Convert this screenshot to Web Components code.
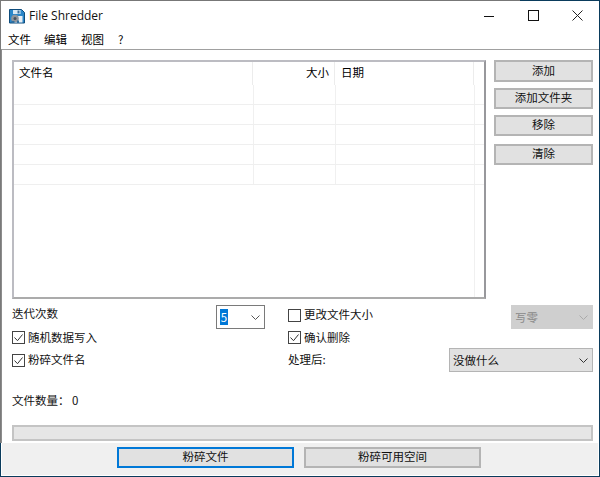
<!DOCTYPE html>
<html lang="zh"><head><meta charset="utf-8">
<style>
html,body{margin:0;padding:0;background:#fff;overflow:hidden}
body{font:11.5px/16px "Noto Sans CJK SC","Noto Sans",sans-serif;color:#000}
</style></head><body>
<fs-window>
  <fs-titlebar slot="title">File Shredder</fs-titlebar>
  <fs-menubar slot="menu"><span>文件</span><span>编辑</span><span>视图</span><span>?</span></fs-menubar>
  <fs-list slot="list"></fs-list>
  <fs-button slot="side" h="22">添加</fs-button>
  <fs-button slot="side" h="21" gap="6">添加文件夹</fs-button>
  <fs-button slot="side" h="21" gap="6">移除</fs-button>
  <fs-button slot="side" h="21" gap="8">清除</fs-button>
  <fs-options slot="options"></fs-options>
  <fs-progress slot="progress"></fs-progress>
  <fs-button slot="foot" w="177" h="21" focus>粉碎文件</fs-button>
  <fs-button slot="foot" w="177" h="21">粉碎可用空间</fs-button>
</fs-window>
<script>
const def=(name,html)=>{customElements.define(name,class extends HTMLElement{
  constructor(){super();const r=this.attachShadow({mode:"open"});r.innerHTML=typeof html==="function"?html(this):html;}
})};
const F='font-size:11.5px;line-height:16px;';

def("fs-window",`<style>
:host{display:block;box-sizing:border-box;width:600px;height:477px;padding:1px;
 background:linear-gradient(#777 0 0) 0 0/520px 1px no-repeat,linear-gradient(#7a7a7a 0 0) 0 1px/1px 442px no-repeat,#0a3b5c}
.in{background:#fff;height:100%;display:flex;flex-direction:column;box-sizing:border-box}
.main{flex:1;display:flex;flex-direction:column;min-height:0;border-top:1px solid #a0a0a0;border-left:1px solid #8c8c8c;
 background:#fff;padding:10px 6px 0 10px;box-sizing:border-box}
.top{display:flex;gap:8px;height:239px;flex:none}
.side{display:flex;flex-direction:column;width:99px}
.foot{margin:0 1px 1px 1px;height:32px;background:#f0f0f0;display:flex;gap:10px;padding:4px 0 0 115px;box-sizing:border-box;flex:none}
</style><div class="in">
<slot name="title"></slot><slot name="menu"></slot>
<div class="main"><div class="top"><slot name="list"></slot><div class="side"><slot name="side"></slot></div></div>
<slot name="options"></slot><slot name="progress"></slot></div>
<div class="foot"><slot name="foot"></slot></div>
</div>`);

def("fs-titlebar",`<style>
:host{display:flex;align-items:center;height:29px;font:12px/16px "Open Sans","Noto Sans",sans-serif;color:#111;flex:none}
svg.logo{margin:0 4px 0 8px;flex:none}
.t{flex:1;margin-top:1px}
.b{width:44px;height:29px;display:flex;align-items:center;justify-content:center;flex:none}
.b svg{display:block}
</style>
<svg class="logo" width="16" height="16" viewBox="0 0 16 16">
<path d="M.5 1.500h12l3 3v10.500H.5z" fill="#2a86c8" stroke="#0f4c7c" stroke-width="1"/>
<rect x="4" y="2" width="7.500" height="4" fill="#d8e8f4"/><rect x="8.500" y="2.500" width="2" height="3" fill="#3a6f9c"/>
<rect x="3" y="8" width="10.500" height="6.500" fill="#e8eef3"/>
<circle cx="6" cy="10.500" r="3.800" fill="#8f949b"/><circle cx="6" cy="10.500" r="1.500" fill="#46525e"/>
<path d="M2.500 13h3v2h-3zM8 12.500h2v2.500H8z" fill="#2f6f9f"/>
</svg>
<span class="t"><slot></slot></span>
<div class="b"><svg width="10" height="10"><path d="M0 5.500h10" stroke="#111"/></svg></div>
<div class="b"><svg width="11" height="11"><rect x=".5" y=".5" width="10" height="10" fill="none" stroke="#111"/></svg></div>
<div class="b"><svg width="11" height="11"><path d="M.5.5l10 10M10.500.5l-10 10" stroke="#222"/></svg></div>`);

def("fs-menubar",`<style>
:host{display:flex;height:19px;padding:0 0 2px 7px;box-sizing:border-box;gap:13px;align-items:center;${F}flex:none}
::slotted(span){display:block}
::slotted(span:nth-child(3)){margin-left:1px}
::slotted(span:last-child){margin-left:1px}
</style><slot></slot>`);

def("fs-list",`<style>
:host{display:flex;flex-direction:column;box-sizing:border-box;width:474px;height:239px;border:2px solid;border-color:#bcbcc2 #98989c #ababab #bcbcc2;background:#fff;overflow:hidden;flex:none}
.h,.r,.rest{display:grid;grid-template-columns:240px 82px 139px 1fr;box-sizing:border-box}
.h{height:23px;grid-template-columns:239px 82px 139px 1fr}
.h span{display:block;box-sizing:border-box;border-right:1px solid #ececec;padding:0 5px;${F}line-height:20px}
.h span:nth-child(2){text-align:right}
.h span:nth-child(3){padding-left:6px}
.h span:last-child{border:0}
.r{height:20px;border-bottom:1px solid #efefef}
.r i{display:block;border-right:1px solid #f0f0f0}
.r i.l{border:0}
.rest{flex:1}
.rest i{display:block}
.rest i:nth-child(3){border-right:1px solid #f0f0f0}
</style>
<div class="h"><span>文件名</span><span>大小</span><span>日期</span><span></span></div>
${Array.from({length:5},()=>`<div class="r"><i></i><i></i><i></i><i class="l"></i></div>`).join("")}
<div class="rest"><i></i><i></i><i></i><i></i></div>`);

def("fs-button",h=>`<style>
:host{display:block;box-sizing:border-box;flex:none;width:${h.getAttribute("w")||99}px;height:${h.getAttribute("h")||21}px;
margin-top:${h.getAttribute("gap")||0}px;background:#e1e1e1;border:${h.hasAttribute("focus")?"2px solid #0078d7":"2px solid #b4b4b4"};
text-align:center;font-size:11.5px;line-height:${(+h.getAttribute("h")||21)-6}px;color:#111}
</style><slot></slot>`);

def("fs-check",h=>`<style>
:host{display:flex;align-items:center;height:16px;${F}color:#111}
svg{margin-right:3px;flex:none;display:block}
span{margin-top:-2px}
</style><svg width="13" height="13" viewBox="0 0 13 13"><rect x=".5" y=".5" width="12" height="12" fill="#fff" stroke="#444"/>${h.hasAttribute("checked")?'<path d="M2.500 6.500l3 3.200 5-6.200" fill="none" stroke="#333"/>':""}</svg><span><slot></slot></span>`);

def("fs-select",h=>{
const v=h.getAttribute("variant");
const st={plain:"background:#fff;border:1px solid #7a7a7a;",gray:"background:#e1e1e1;border:1px solid #b4b4b4;",dis:"background:#cfcfcf;border:1px solid #cfcfcf;color:#8a8a8a;"}[v];
const c={plain:"#555",gray:"#333",dis:"#aaa"}[v];
return `<style>
:host{display:flex;align-items:center;box-sizing:border-box;height:24px;${st}${F}padding:0 4px 0 3px}
.t{flex:1}
.sel{background:#0078d7;color:#fff;display:inline-block;width:8px;line-height:16px;text-align:center}
svg{flex:none;display:block}
</style><span class="t"><span class="${v==="plain"?"sel":""}"><slot></slot></span></span>
<svg width="9" height="5" viewBox="0 0 9 5"><path d="M.5.5L4.500 4.500 8.500.5" fill="none" stroke="${c}"/></svg>`});

def("fs-options",`<style>
:host{display:grid;box-sizing:border-box;height:120px;flex:none;margin-top:6px;grid-template-columns:204px 72px 161px 62px 82px;grid-template-rows:24px 19px 24px 1fr;${F}color:#111}
.lbl{align-self:center}
.a{grid-column:1/3}
</style>
<div class="lbl" style="margin-top:-9px">迭代次数</div>
<fs-select variant="plain" style="width:49px">5</fs-select>
<fs-check style="align-self:start;margin-top:2px">更改文件大小</fs-check>
<div></div>
<fs-select variant="dis">写零</fs-select>
<fs-check checked class="a" style="align-self:center;margin-top:-2px">随机数据写入</fs-check>
<fs-check checked style="grid-column:3;align-self:center;margin-top:-2px">确认删除</fs-check>
<div style="grid-column:4/6"></div>
<fs-check checked class="a" style="align-self:center">粉碎文件名</fs-check>
<div class="lbl" style="grid-column:3;margin-top:-2px">处理后:</div>
<fs-select variant="gray" style="grid-column:4/6">没做什么</fs-select>
<div style="grid-column:1/6;padding-top:20px">文件数量： 0</div>`);

def("fs-progress",`<style>
:host{display:block;box-sizing:border-box;flex:none;width:581px;height:16px;background:#e6e6e6;border:2px solid #c4c4c4}
</style>`);
</script>
</body></html>
